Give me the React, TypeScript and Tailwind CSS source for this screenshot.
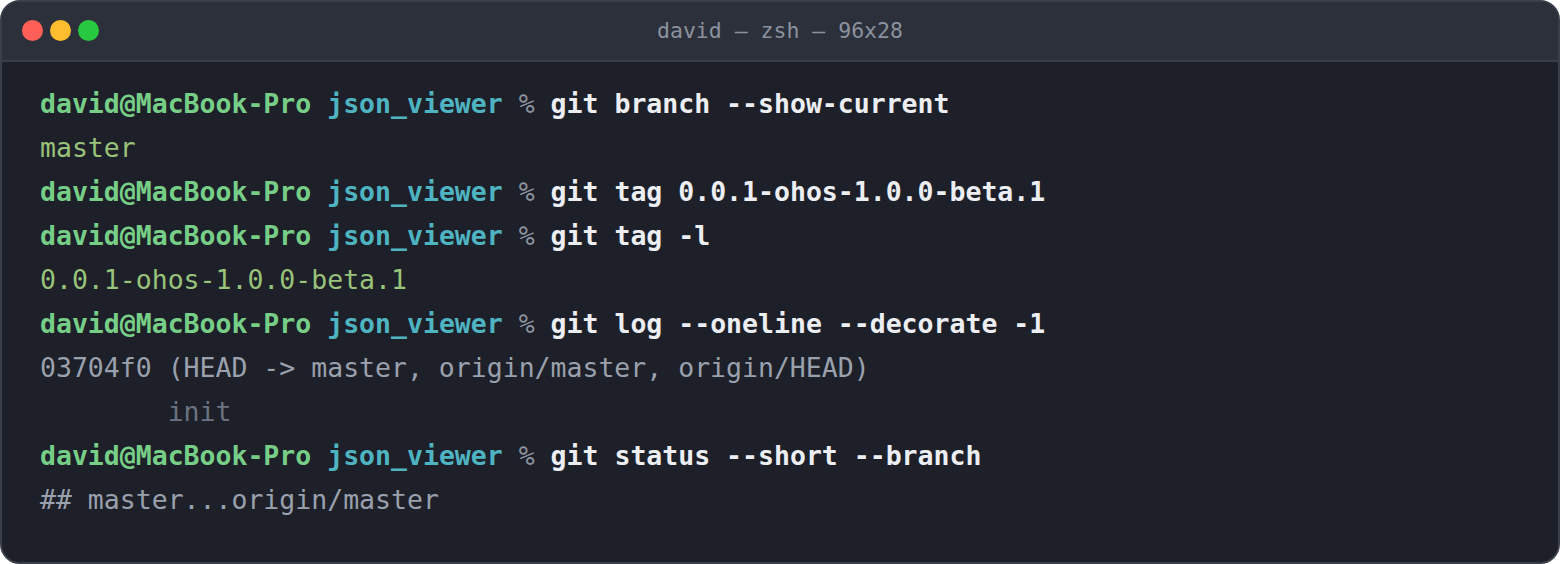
import React from "react";

const mono = { fontFamily: '"DejaVu Sans Mono", "Liberation Mono", monospace' };

function Prompt({ cmd }: { cmd: string }) {
  return (
    <div className="whitespace-pre">
      <span className="font-bold text-[#77cf87]">david@MacBook-Pro</span>{" "}
      <span className="font-bold text-[#4fb4c1]">json_viewer</span>{" "}
      <span className="text-[#8b929e]">%</span>{" "}
      <span className="font-bold text-[#eceef2]">{cmd}</span>
    </div>
  );
}

export default function App() {
  return (
    <div className="w-[1560px] h-[564px] bg-white">
      <div
        className="w-full h-full rounded-[20px] border-2 border-[#393e4a] bg-[#1d2029] overflow-hidden flex flex-col"
        style={mono}
      >
        <div className="relative h-[60px] bg-[#2c303b] border-b-2 border-[#393e4a] flex items-center justify-center shrink-0">
          <div className="absolute left-[20px] top-[18px] flex gap-[7px]">
            <div className="w-[21px] h-[21px] rounded-full bg-[#ff5f57]" />
            <div className="w-[21px] h-[21px] rounded-full bg-[#febc2e]" />
            <div className="w-[21px] h-[21px] rounded-full bg-[#28c840]" />
          </div>
          <div className="text-[21.5px] text-[#8b929e] leading-none">david — zsh — 96x28</div>
        </div>
        <div className="flex-1 pl-[38px] pt-[20px] text-[26.5px] leading-[44px]">
          <Prompt cmd="git branch --show-current" />
          <div className="text-[#98c379] whitespace-pre">master</div>
          <Prompt cmd="git tag 0.0.1-ohos-1.0.0-beta.1" />
          <Prompt cmd="git tag -l" />
          <div className="text-[#98c379] whitespace-pre">0.0.1-ohos-1.0.0-beta.1</div>
          <Prompt cmd="git log --oneline --decorate -1" />
          <div className="text-[#9aa1ad] whitespace-pre">03704f0 (HEAD -&gt; master, origin/master, origin/HEAD)</div>
          <div className="text-[#6b7281] whitespace-pre">        init</div>
          <Prompt cmd="git status --short --branch" />
          <div className="text-[#9aa1ad] whitespace-pre">## master...origin/master</div>
        </div>
      </div>
    </div>
  );
}
